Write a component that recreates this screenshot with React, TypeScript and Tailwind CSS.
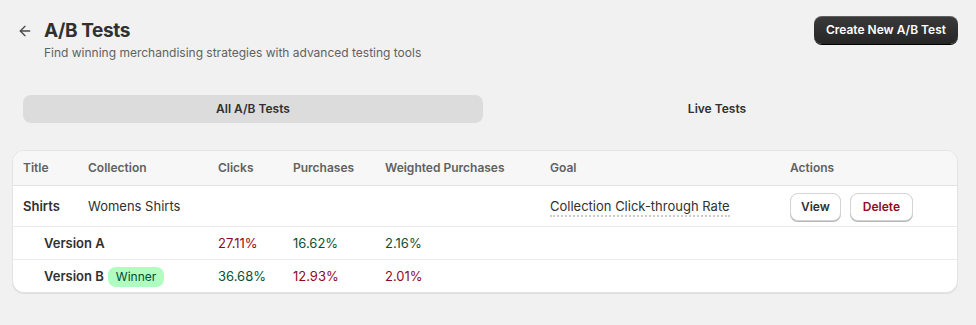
import { ArrowLeft } from 'lucide-react';

const cols = 'grid grid-cols-[65px_130px_75px_92px_165px_240px_1fr]';

function Pct({ v, good }: { v: string; good: boolean }) {
  return <div className={`px-[10px] ${good ? 'text-[#0c5132]' : 'text-[#8e0b21]'}`}>{v}</div>;
}

export default function App() {
  return (
    <main className="min-h-screen bg-[#f1f1f1] text-[#303030]" style={{ fontFamily: 'Inter, "Noto Sans", sans-serif' }}>
      <div className="px-3 pt-4">
        {/* Header */}
        <div className="flex items-start justify-between">
          <div className="flex items-start gap-[11px] pl-[5px]">
            <ArrowLeft className="w-[16px] h-[16px] mt-[7px] text-[#4a4a4a]" strokeWidth={2} />
            <div>
              <h1 className="text-[19px] font-bold leading-[30px] tracking-[-0.4px] text-[#303030]">A/B Tests</h1>
              <p className="text-[12px] leading-[14px] text-[#616161]">
                Find winning merchandising strategies with advanced testing tools
              </p>
            </div>
          </div>
          <button className="mr-[6px] h-[28px] px-3 rounded-lg bg-gradient-to-b from-[#3a3a3a] to-[#262626] text-white text-[12px] font-semibold shadow-[inset_0_1px_0_rgba(255,255,255,0.2),0_1px_0_#000]">
            Create New A/B Test
          </button>
        </div>

        {/* Tabs */}
        <div className="mt-[35px] ml-[11px] mr-[13px] grid grid-cols-[460px_1fr]">
          <div className="h-[28px] rounded-lg bg-[#dcdcdc] flex items-center justify-center text-[12px] font-semibold text-[#303030]">
            All A/B Tests
          </div>
          <div className="h-[28px] rounded-lg flex items-center justify-center text-[12px] font-semibold text-[#303030]">
            Live Tests
          </div>
        </div>

        {/* Table */}
        <div className="mt-[27px] mr-[6px] rounded-xl border border-[#e3e3e3] bg-white overflow-hidden shadow-[0_1px_0_rgba(0,0,0,0.08)] text-[13px]">
          <div className={`${cols} h-[35px] items-center bg-[#f7f7f7] border-b border-[#e3e3e3] text-[12px] font-semibold text-[#616161]`}>
            <div className="px-[10px]">Title</div>
            <div className="px-[10px]">Collection</div>
            <div className="px-[10px]">Clicks</div>
            <div className="px-[10px]">Purchases</div>
            <div className="px-[10px]">Weighted Purchases</div>
            <div className="px-[10px]">Goal</div>
            <div className="px-[10px]">Actions</div>
          </div>

          <div className={`${cols} h-[41px] items-center border-b border-[#ebebeb] pt-[2px]`}>
            <div className="px-[10px] font-semibold">Shirts</div>
            <div className="px-[10px]">Womens Shirts</div>
            <div />
            <div />
            <div />
            <div className="px-[10px]">
              <span className="border-b-2 border-dotted border-[#cccccc] pb-[1px]">Collection Click-through Rate</span>
            </div>
            <div className="px-[10px] flex items-center gap-[9px]">
              <button className="h-[28px] px-[10px] rounded-lg border border-[#d4d4d4] bg-white text-[12px] font-semibold text-[#303030] shadow-[0_1px_0_#b5b5b5]">
                View
              </button>
              <button className="h-[28px] px-[12px] rounded-lg border border-[#d4d4d4] bg-white text-[12px] font-semibold text-[#8e0b21] shadow-[0_1px_0_#b5b5b5]">
                Delete
              </button>
            </div>
          </div>

          <div className={`${cols} h-[33px] items-center border-b border-[#ebebeb] pt-[2px]`}>
            <div className="col-span-2 pl-[31px] font-semibold">Version A</div>
            <Pct v="27.11%" good={false} />
            <Pct v="16.62%" good />
            <Pct v="2.16%" good />
          </div>

          <div className={`${cols} h-[32px] items-center pt-[1px]`}>
            <div className="col-span-2 pl-[31px] flex items-center gap-[4px]">
              <span className="font-semibold">Version B</span>
              <span className="h-[20px] px-[8px] rounded-lg bg-[#affebf] text-[#014b40] text-[12px] flex items-center">Winner</span>
            </div>
            <Pct v="36.68%" good />
            <Pct v="12.93%" good={false} />
            <Pct v="2.01%" good={false} />
          </div>
        </div>
      </div>
    </main>
  );
}
